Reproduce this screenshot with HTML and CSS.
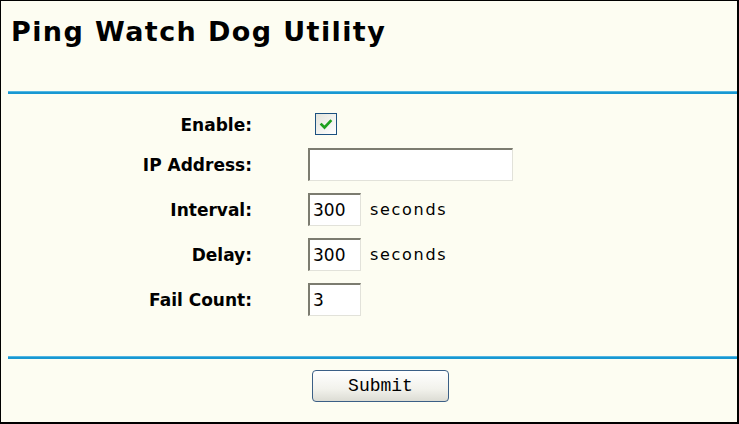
FILE: index.html
```html
<!DOCTYPE html>
<html lang="en">
<head>
    <meta charset="UTF-8">
    <meta name="viewport" content="width=device-width, initial-scale=1.0">
    <title>Ping Watch Dog Utility</title>
    <link rel="stylesheet" href="styles.css">
</head>
<body>
    <div class="page">
        <h1 class="title">Ping Watch Dog Utility</h1>
        <div class="rule"></div>

        <div class="form">
            <label class="label">Enable:</label>
            <div class="field">
                <span class="check">
                    <svg width="14" height="12" viewBox="0 0 14 12">
                        <path d="M2.5 6.5 L5.5 9.5 L11.5 3" fill="none" stroke="#1fa11f" stroke-width="2.6" stroke-linecap="square"/>
                    </svg>
                </span>
            </div>

            <label class="label">IP Address:</label>
            <div class="field">
                <input type="text" class="box box-wide" value="">
            </div>

            <label class="label">Interval:</label>
            <div class="field">
                <input type="text" class="box box-small" value="300">
                <span class="unit">seconds</span>
            </div>

            <label class="label">Delay:</label>
            <div class="field">
                <input type="text" class="box box-small" value="300">
                <span class="unit">seconds</span>
            </div>

            <label class="label">Fail Count:</label>
            <div class="field">
                <input type="text" class="box box-small" value="3">
            </div>
        </div>

        <div class="rule rule-bottom"></div>

        <div class="actions">
            <button class="submit">Submit</button>
        </div>
    </div>
</body>
</html>
```

FILE: styles.css
```css
body {
    margin: 0;
    background: #fff;
    font-family: "DejaVu Sans", Arial, sans-serif;
}
.page {
    box-sizing: border-box;
    width: 739px;
    height: 424px;
    border-style: solid;
    border-color: #000;
    border-width: 1px 2px 2px 1px;
    background: #fdfdf2;
    overflow: hidden;
}
.title {
    margin: 0;
    padding: 15px 0 0 10px;
    font-size: 27px;
    line-height: 32px;
    font-weight: bold;
    letter-spacing: 1.4px;
    color: #000;
}
.rule {
    height: 3px;
    margin: 43px 0 0 7px;
    background: #1898d2;
    border-top: 1px solid #52b6e2;
    box-sizing: border-box;
}
.form {
    display: grid;
    grid-template-columns: 251px 1fr;
    column-gap: 56px;
    row-gap: 12px;
    padding-top: 19px;
}
.label {
    justify-self: end;
    align-self: center;
    font-size: 17px;
    font-weight: bold;
    color: #000;
}
.field {
    display: flex;
    align-items: center;
    gap: 9px;
}
.check {
    box-sizing: border-box;
    width: 22px;
    height: 22px;
    margin: 0 0 1px 7px;
    border: 1px solid #1c5180;
    background: linear-gradient(135deg, #e4e4dc, #ffffff);
    display: flex;
    align-items: center;
    justify-content: center;
}
.box {
    box-sizing: border-box;
    height: 33px;
    margin: 0;
    padding: 0 3px;
    border-style: solid;
    border-width: 2px 1px 1px 2px;
    border-color: #7c7c70 #e2e2da #e2e2da #7c7c70;
    background: #fff;
    font-family: "DejaVu Sans", Arial, sans-serif;
    font-size: 17px;
    color: #000;
}
.box-wide {
    width: 205px;
}
.box-small {
    width: 53px;
}
.unit {
    font-size: 16px;
    letter-spacing: 1.7px;
    color: #000;
}
.rule-bottom {
    margin-top: 40px;
}
.actions {
    padding: 11px 0 0 311px;
}
.submit {
    box-sizing: border-box;
    width: 137px;
    height: 32px;
    border: 1px solid #3b5f86;
    border-radius: 4px;
    background: linear-gradient(#ffffff, #f2f2ec 60%, #dcdcd4);
    font-family: "Liberation Mono", monospace;
    font-size: 18px;
    color: #000;
    padding: 0;
}
```
